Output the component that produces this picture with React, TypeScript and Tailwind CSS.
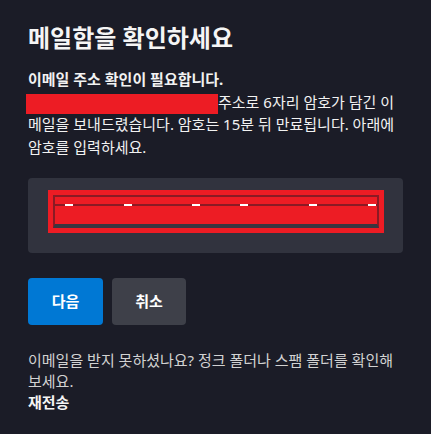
const FONT = "font-['Segoe_UI','Noto_Sans','Noto_Sans_CJK_KR',sans-serif]";

// tick marks along the redacted code field
const TICKS = [10, 69, 137, 185, 254, 313];

function CodeField() {
  return (
    <div className="rounded-[4px] bg-[#31333e] px-5 pb-5 pt-3">
      <div className="h-[43px] w-[336px] bg-[#ed1c24] px-[5px] pt-[5px]">
        <div className="relative h-[33px] border-x-2 border-t-2 border-b-[4px] border-x-[#8b1a24] border-t-[#8b1a24] border-b-[#3a3640]">
          <div className="absolute left-0 right-0 top-[7px] h-[2px] bg-[#8b1a24]" />
          {TICKS.map((x) => (
            <div
              key={x}
              className="absolute top-[7px] h-[2px] w-[8px] bg-white"
              style={{ left: x }}
            />
          ))}
        </div>
      </div>
    </div>
  );
}

export default function App() {
  return (
    <div className={`min-h-[434px] w-[431px] bg-[#1b1c27] px-[28px] pt-[22px] text-[#f2f2f2] ${FONT}`}>
      <h1 className="text-[24px] font-semibold leading-[32px] text-[#f5f5f5]">메일함을 확인하세요</h1>

      <div className="mt-[14px] text-[15px] leading-[22.5px]">
        <p className="font-bold">이메일 주소 확인이 필요합니다.</p>
        <p>
          <span className="inline-block h-[20px] w-[192px] translate-y-[3px] -ml-[2px] bg-[#ed1c24] align-top" />
          주소로 6자리 암호가 담긴 이메일을 보내드렸습니다. 암호는 15분 뒤 만료됩니다. 아래에 암호를 입력하세요.
        </p>
      </div>

      <div className="mt-[20px]">
        <CodeField />
      </div>

      <div className="mt-[25px] flex gap-[9px]">
        <button className="h-[47px] w-[75px] rounded-[4px] bg-[#0078d4] text-[15px] font-bold text-white">
          다음
        </button>
        <button className="h-[47px] w-[74px] rounded-[4px] bg-[#3e4049] text-[15px] font-bold text-white">
          취소
        </button>
      </div>

      <div className="mt-[25px] text-[15px] leading-[21px]">
        <p className="text-[#d2d2d2]">이메일을 받지 못하셨나요? 정크 폴더나 스팸 폴더를 확인해 보세요.</p>
        <p className="font-bold text-[#f5f5f5]">재전송</p>
      </div>
    </div>
  );
}
